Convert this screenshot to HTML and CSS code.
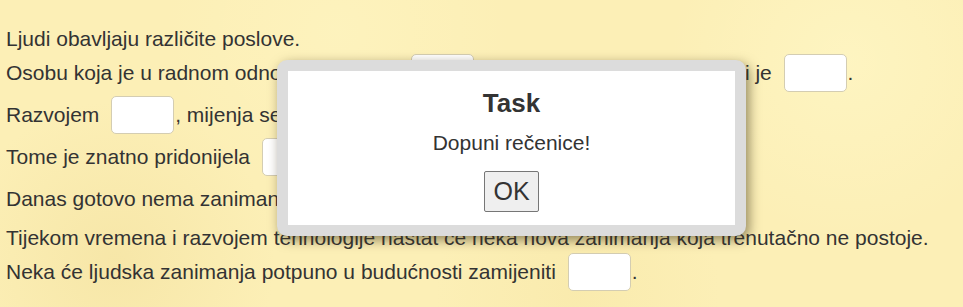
FILE: index.html
```html
<!DOCTYPE html>
<html lang="hr">
<head>
  <meta charset="UTF-8">
  <title>Zanimanja</title>
  <link rel="stylesheet" href="styles.css">
</head>
<body>
<div id="task">
  <div class="row text">Ljudi obavljaju različite poslove.</div>
  <div class="row">Osobu koja je u radnom odnosu nazivamo <input class="gap">, a osoba kod koje radnik radi je <input class="gap">.</div>
  <div class="row">Razvojem <input class="gap">, mijenja se i način rada.</div>
  <div class="row">Tome je znatno pridonijela <input class="gap">.</div>
  <div class="row last">Danas gotovo nema zanimanja bez <input class="gap">.</div>
  <div class="row text">Tijekom vremena i razvojem tehnologije nastat će neka nova zanimanja koja trenutačno ne postoje.</div>
  <div class="row">Neka će ljudska zanimanja potpuno u budućnosti zamijeniti <input class="gap">.</div>
</div>

<div id="dialog">
  <div class="dialog-body">
    <h2>Task</h2>
    <p>Dopuni rečenice!</p>
    <button id="okButton">OK</button>
  </div>
</div>
</body>
</html>
```

FILE: styles.css
```css
body {
  margin: 0;
  font-family: 'Liberation Sans', Arial, sans-serif;
  font-size: 21px;
  color: #333;
  background-color: #fcefb6;
  background-image:
    radial-gradient(circle at 12% 85%, rgba(240, 220, 150, 0.45) 0, rgba(240, 220, 150, 0) 18%),
    radial-gradient(circle at 88% 20%, rgba(255, 248, 200, 0.6) 0, rgba(255, 248, 200, 0) 20%),
    radial-gradient(circle at 60% 95%, rgba(245, 228, 160, 0.4) 0, rgba(245, 228, 160, 0) 22%),
    radial-gradient(circle at 35% 10%, rgba(255, 246, 196, 0.5) 0, rgba(255, 246, 196, 0) 25%);
  height: 307px;
  overflow: hidden;
}
#task {
  padding: 26px 0 0 6px;
}
.row {
  height: 42px;
  display: flex;
  align-items: center;
  white-space: pre;
}
.row.text {
  height: 26px;
}
.row.last {
  margin-bottom: 5px;
}
.gap {
  width: 63px;
  height: 38px;
  box-sizing: border-box;
  margin: 0 1px 0 6px;
  border: 1px solid #d4cdb2;
  border-radius: 5px;
  background: #fff;
  font-size: 18px;
}
#dialog {
  position: absolute;
  left: 277px;
  top: 60px;
  width: 469px;
  height: 176px;
  box-sizing: border-box;
  padding: 11px;
  background: #dcdcdc;
  border-radius: 10px;
  box-shadow: 3px 4px 12px rgba(60, 50, 20, 0.55);
}
.dialog-body {
  background: #fff;
  height: 100%;
  text-align: center;
  padding-top: 17px;
  box-sizing: border-box;
}
.dialog-body h2 {
  margin: 0;
  font-size: 26px;
  line-height: 30px;
  font-weight: bold;
}
.dialog-body p {
  margin: 13px 0 0;
  line-height: 24px;
}
#okButton {
  display: block;
  margin: 16px auto 0;
  width: 55px;
  height: 41px;
  font-family: 'Liberation Sans', Arial, sans-serif;
  font-size: 25px;
  color: #333;
  background: #efefef;
  border: 1px solid #767676;
  border-radius: 2px;
  padding: 0;
}
```
